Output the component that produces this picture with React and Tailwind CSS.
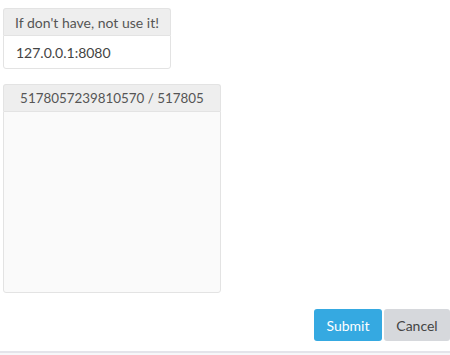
import React from "react";

export default function App() {
  return (
    <div className="h-[355px] w-[450px] overflow-hidden bg-white font-['Lato',sans-serif] text-[14px] text-[#555]">
      <div className="flex h-[351px] flex-col pl-[3px]">
        {/* proxy field */}
        <div className="mt-[8px] flex w-[168px] flex-col">
          <div className="flex h-[27px] items-center justify-center rounded-t-[3px] border border-b-0 border-[#e3e3e3] bg-[#eeeeee]">
            If don't have, not use it!
          </div>
          <div className="flex h-[34px] items-center rounded-b-[3px] border border-[#e3e3e3] bg-white px-[12px] text-[#444]">
            127.0.0.1:8080
          </div>
        </div>

        {/* captcha box */}
        <div className="mt-[15px] flex w-[218px] flex-col">
          <div className="flex h-[27px] items-center justify-center rounded-t-[3px] border border-b-0 border-[#e3e3e3] bg-[#eeeeee] text-[13.4px]">
            5178057239810570 / 517805
          </div>
          <div className="h-[182px] rounded-b-[3px] border border-[#e3e3e3] bg-[#fafafa]" />
        </div>

        <div className="mt-[16px] flex justify-end gap-[2px]">
          <button className="h-[32px] w-[68px] rounded-[3px] bg-[#35a9e1] text-white">
            Submit
          </button>
          <button className="h-[32px] w-[66px] rounded-[3px] bg-[#d6d8dc] text-[#444]">
            Cancel
          </button>
        </div>
      </div>
      <div className="h-[4px] border-t-2 border-[#e4e4ea] bg-[#f7f7f9]" />
    </div>
  );
}
